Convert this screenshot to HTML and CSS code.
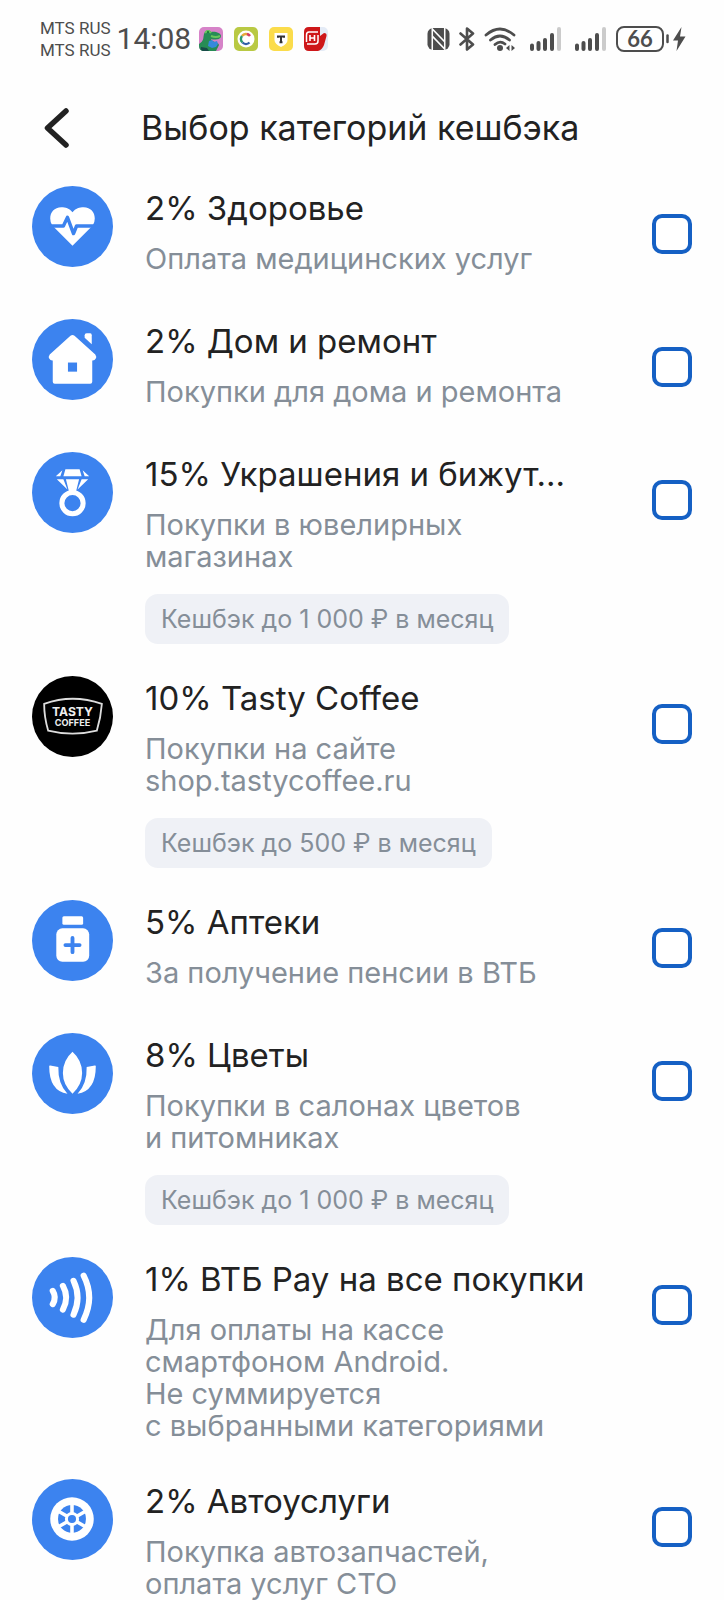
FILE: index.html
```html
<!DOCTYPE html>
<html lang="ru">
<head>
<meta charset="utf-8">
<meta name="viewport" content="width=device-width, initial-scale=1">
<title>Выбор категорий кешбэка</title>
<link rel="stylesheet" href="styles.css">
</head>
<body>
<div class="status">
  <div class="carriers"><span>MTS RUS</span><span>MTS RUS</span></div>
  <span class="clock">14:08</span>
  <div class="apps">
    <svg viewBox="0 0 24 24"><rect width="24" height="24" rx="5" fill="#d683c8"/><path d="M0 17C5 14 4 11 5 7C7 2 11 3 12 5C16 4 22 6 22 9C22 13 15 13 12 12C13 16 19 14 20 18L17 24H5Q0 24 0 19Z" fill="#278c55"/><path d="M6 6Q9 2 12 6M12 9Q17 11 21 9" stroke="#68c65c" stroke-width="2" fill="none"/><path d="M10 14l3-1 2 2 3-1 1 3-2 3-4 1-4-2z" fill="#3689dc"/><path d="M2 20l6 1 2 3H4Q1 23 2 20Z" fill="#174b48"/><circle cx="9" cy="5" r="1" fill="#173"/></svg>
    <svg viewBox="0 0 24 24"><rect width="24" height="24" rx="5" fill="#b9c943"/><circle cx="12" cy="12" r="8.500" fill="#fff"/><path d="M15.500 8.500A5 5 0 0 0 8 9" stroke="#e5a93a" stroke-width="2.400" fill="none"/><path d="M8 9A5 5 0 0 0 8.500 15.500" stroke="#2c9a72" stroke-width="2.400" fill="none"/><path d="M8.500 15.500A5 5 0 0 0 15.500 15.500" stroke="#315fa8" stroke-width="2.400" fill="none"/><path d="M13 7Q15 7.500 16 9" stroke="#d43d68" stroke-width="2.400" fill="none"/></svg>
    <svg viewBox="0 0 24 24"><rect width="24" height="24" rx="5" fill="#fbdc4b"/><path d="M5.500 6h13v7q0 4-6.500 7-6.500-3-6.500-7z" fill="#fff"/><path d="M9 10.800V9.500h6v1.300M12 9.500v6M10.500 15.300h3" stroke="#333" stroke-width="2" fill="none"/></svg>
    <svg viewBox="0 0 24 24"><rect width="24" height="24" rx="5" fill="#e4ebf6"/><path d="M5 0H16V9L20 6Q23 6 22.500 9L20 18Q18 23 14 24H5Q0 24 0 19V5Q0 0 5 0Z" fill="#ce1719"/><path d="M14 5H5Q2.500 5 2.500 8V15M3 17H11Q14 17 14 14V8" stroke="#fff" stroke-width="1.500" fill="none"/><path d="M6 8v6M10.500 8v6M6 11h4.500" stroke="#fff" stroke-width="1.600"/></svg>
  </div>
  <div class="signals">
    <svg class="nfc" viewBox="0 0 24 24"><rect x=".5" y=".5" width="23" height="23" rx="6" fill="#4d4d4d"/><path d="M5.500 24V1.500L18.500 15V0M5.500 9L18.500 22.500V15" fill="none" stroke="#fefefe" stroke-width="1.600"/></svg>
    <svg class="bt" viewBox="0 0 16 24"><path d="M1.500 6.500L14 17.500L8 22.500V1.500L14 6.500L1.500 17.500" fill="none" stroke="#4d4d4d" stroke-width="2.600" stroke-linejoin="round" stroke-linecap="round"/></svg>
    <svg class="wifi" viewBox="0 0 32 24"><path d="M2 8Q16-4 30 8M6.500 13Q16 5 25.500 13M11 17.500Q16 13 21 17" fill="none" stroke="#4d4d4d" stroke-width="2.800" stroke-linecap="round"/><circle cx="16" cy="21" r="3" fill="#4d4d4d"/><path d="M25.500 18v6l-3.500-3zM27.500 18v6l3.500-3z" fill="#4d4d4d"/></svg>
    <svg class="bars" viewBox="0 0 31 24"><path d="M2 18.500V22M8.500 16V22M15 13V22M22 8V22" stroke="#4d4d4d" stroke-width="4" stroke-linecap="round"/><path d="M29 2V22" stroke="#cbcbcb" stroke-width="4" stroke-linecap="round"/></svg>
    <svg class="bars" viewBox="0 0 31 24"><path d="M2 18.500V22M8.500 16V22M15 13V22M22 8V22" stroke="#4d4d4d" stroke-width="4" stroke-linecap="round"/><path d="M29 2V22" stroke="#cbcbcb" stroke-width="4" stroke-linecap="round"/></svg>
    <div class="power">
      <span class="battery">66</span>
      <svg class="bolt" viewBox="0 0 20 26"><path d="M1.500 9.500V16" stroke="#4d4d4d" stroke-width="2.500" stroke-linecap="round"/><path d="M15.500 1L7 14.500H12L10.500 25L19.500 10.500H14Z" fill="#4d4d4d"/></svg>
    </div>
  </div>
</div>

<header class="header">
  <button class="back" type="button" aria-label="Назад"><svg viewBox="0 0 25 40"><path d="M22 3L3.500 20L22 37" fill="none" stroke="#222" stroke-width="5.500" stroke-linecap="round" stroke-linejoin="round"/></svg></button>
  <h1>Выбор категорий кешбэка</h1>
</header>

<main class="list">
  <label class="item">
    <svg class="icon" viewBox="0 0 80 80"><circle cx="40" cy="40" r="40" fill="#3c83ef"/><path d="M40 26C43 22 47 21 51 21C58 21 62 26 62 32Q62 36 60 39L40 59L20 39Q18 36 18 32C18 26 22 21 29 21C33 21 37 22 40 26Z" fill="#fff"/><path d="M17 39.500H31L35 31L41 47L44 39.500H63" fill="none" stroke="#3c83ef" stroke-width="3.400" stroke-linejoin="round"/></svg>
    <span class="text"><span class="name">2% Здоровье</span><span class="note">Оплата медицинских услуг</span></span>
    <input class="check" type="checkbox">
  </label>
  <label class="item">
    <svg class="icon" viewBox="0 0 80 80"><circle cx="40" cy="40" r="40" fill="#3c83ef"/><path d="M38 16.500Q40 15 42 16.500L62.500 35Q64 37 63 39Q62 41 60 41H59.500V62Q59.500 64 57.500 64H22.500Q20.500 64 20.500 62V41H20Q18 41 17 39Q16 37 17.500 35Z" fill="#fff"/><rect x="35.500" y="43" width="9" height="9" fill="#3c83ef"/><path d="M52 16Q52 14 54 14H57.500Q59 14 59 16V25L52 18.500Z" fill="#fff"/></svg>
    <span class="text"><span class="name">2% Дом и ремонт</span><span class="note">Покупки для дома и ремонта</span></span>
    <input class="check" type="checkbox">
  </label>
  <label class="item">
    <svg class="icon" viewBox="0 0 80 80"><circle cx="40" cy="40" r="40" fill="#3c83ef"/><circle cx="40" cy="50.500" r="10.500" fill="none" stroke="#fff" stroke-width="5"/><path d="M33 17H47L49 24H31ZM30 18L28 24H23.500ZM50 18L52 24H56.500ZM24.500 27H31L35 37ZM55.500 27H49L45 37ZM33.500 27H46.500L43.500 39H36.500Z" fill="#fff"/></svg>
    <span class="text"><span class="name">15% Украшения и бижут…</span><span class="note">Покупки в ювелирных магазинах</span><span class="chip">Кешбэк до 1 000 ₽ в месяц</span></span>
    <input class="check" type="checkbox">
  </label>
  <label class="item">
    <svg class="icon" viewBox="0 0 80 80"><circle cx="40" cy="40" r="40" fill="#000"/><path d="M12 27.500Q40 17.500 69 27.500Q68 41 64 54Q40 60 16 54Q12 41 12 27.500Z" fill="none" stroke="#ddd" stroke-width="1.800"/><text class="logo-top" x="40" y="39.500" text-anchor="middle">TASTY</text><text class="logo-bottom" x="40" y="49" text-anchor="middle">COFFEE</text></svg>
    <span class="text"><span class="name">10% Tasty Coffee</span><span class="note">Покупки на сайте shop.tastycoffee.ru</span><span class="chip">Кешбэк до 500 ₽ в месяц</span></span>
    <input class="check" type="checkbox">
  </label>
  <label class="item">
    <svg class="icon" viewBox="0 0 80 80"><circle cx="40" cy="40" r="40" fill="#3c83ef"/><rect x="30" y="16" width="20.500" height="8.500" rx="1.500" fill="#fff"/><rect x="24" y="28" width="32.500" height="33" rx="6" fill="#fff"/><path d="M40 37.500V51.500M33 44.500H47" stroke="#3c83ef" stroke-width="3.800" stroke-linecap="round"/></svg>
    <span class="text"><span class="name">5% Аптеки</span><span class="note">За получение пенсии в ВТБ</span></span>
    <input class="check" type="checkbox">
  </label>
  <label class="item">
    <svg class="icon" viewBox="0 0 80 80"><circle cx="40" cy="40" r="40" fill="#3c83ef"/><path d="M40 18.500Q49.500 27 49.500 39.500Q49.500 51 40 60Q30.500 51 30.500 39.500Q30.500 27 40 18.500ZM17 33Q16.500 32 18 32L26 33.500Q25.500 50 35 60Q17 57 17 33ZM63 33Q63.500 32 62 32L54 33.500Q54.500 50 45 60Q63 57 63 33Z" fill="#fff"/></svg>
    <span class="text"><span class="name">8% Цветы</span><span class="note">Покупки в салонах цветов и&nbsp;питомниках</span><span class="chip">Кешбэк до 1 000 ₽ в месяц</span></span>
    <input class="check" type="checkbox">
  </label>
  <label class="item">
    <svg class="icon" viewBox="0 0 80 80"><circle cx="40" cy="40" r="40" fill="#3c83ef"/><path d="M20.500 33.500Q24.500 40 20.500 46.500M30.500 28.500Q37 40 30.500 52M41 23.500Q49 40 41 57M51 18.500Q62 40 51 62" fill="none" stroke="#fff" stroke-width="6" stroke-linecap="round"/></svg>
    <span class="text"><span class="name">1% ВТБ Pay на все покупки</span><span class="note">Для оплаты на кассе смартфоном Android. Не&nbsp;суммируется с&nbsp;выбранными категориями</span></span>
    <input class="check" type="checkbox">
  </label>
  <label class="item">
    <svg class="icon" viewBox="0 0 80 80"><circle cx="40" cy="40" r="40" fill="#3c83ef"/><circle cx="39.500" cy="39.500" r="21.500" fill="#fff"/><circle cx="39.500" cy="39.500" r="13.800" fill="#3c83ef"/><path d="M39.500 25V54M27 32.300L52 46.700M27 46.700L52 32.300" stroke="#fff" stroke-width="3.500"/><circle cx="39.500" cy="39.500" r="7" fill="#fff"/><circle cx="39.500" cy="39.500" r="4" fill="#3c83ef"/></svg>
    <span class="text"><span class="name">2% Автоуслуги</span><span class="note">Покупка автозапчастей, оплата услуг СТО</span></span>
    <input class="check" type="checkbox">
  </label>
</main>
</body>
</html>
```
FILE: styles.css
```css
* {
  box-sizing: border-box;
}

body {
  margin: 0;
  background: #fefefe;
  color: #222;
  font-family: Inter, "Noto Sans", sans-serif;
}

svg {
  display: block;
  flex: none;
}

.status {
  display: flex;
  align-items: center;
  height: 78px;
  padding: 0 38px 0 40px;
  color: #4d4d4d;
}

.carriers {
  display: flex;
  flex-direction: column;
  font: 17px/22px Roboto, sans-serif;
  margin-right: 6px;
  padding-bottom: 1px;
}

.clock {
  font: 400 30px/40px Roboto, sans-serif;
}

.apps {
  display: flex;
  gap: 11px;
  margin-left: 8px;
}

.apps svg {
  width: 24px;
  height: 24px;
}

.signals {
  display: flex;
  align-items: center;
  gap: 14px;
  margin-left: auto;
}

.nfc {
  width: 23px;
  height: 24px;
}

.bt {
  width: 16px;
  height: 24px;
  margin: 0 -5px;
}

.wifi {
  width: 32px;
  height: 24px;
}

.bars {
  width: 31px;
  height: 24px;
}

.power {
  display: flex;
  align-items: center;
  gap: 2px;
  margin-left: -4px;
}

.battery {
  width: 48px;
  border: 2px solid #4d4d4d;
  border-radius: 8px;
  font: 700 22px/22px Lato, sans-serif;
  text-align: center;
}

.bolt {
  width: 20px;
  height: 26px;
}

.header {
  display: flex;
  align-items: center;
  height: 100px;
  padding: 0 32px;
}

.back {
  width: 109px;
  padding: 0 0 0 12px;
  border: 0;
  background: none;
}

.back svg {
  width: 25px;
  height: 40px;
}

h1 {
  margin: 0;
  font-size: 34px;
  font-weight: 400;
  line-height: 44px;
}

.list {
  padding: 8px 32px 0;
}

.item {
  display: flex;
  align-items: flex-start;
  min-height: 133px;
  padding-bottom: 32px;
}

.icon {
  width: 81px;
  height: 81px;
  margin-right: 32px;
}

.text {
  display: flex;
  flex: 1;
  flex-direction: column;
  align-items: flex-start;
  min-width: 0;
  margin-right: 48px;
}

.name {
  font-size: 33px;
  line-height: 44px;
  white-space: nowrap;
}

.note {
  max-width: 430px;
  margin-top: 13px;
  color: #858e98;
  font-size: 29px;
  line-height: 32px;
}

.note:last-child {
  margin-bottom: 5px;
}

.chip {
  margin-top: 21px;
  padding: 0 16px;
  border-radius: 13px;
  background: #eff1f6;
  color: #858e98;
  font-size: 25px;
  line-height: 50px;
  white-space: nowrap;
}

.check {
  flex: none;
  appearance: none;
  width: 40px;
  height: 40px;
  margin: 28px 0 0;
  border: 4px solid #1560c4;
  border-radius: 10px;
  background: #fff;
}

.check:checked {
  background: #1560c4;
}

.logo-top,
.logo-bottom {
  fill: #eee;
  font-family: Inter, sans-serif;
  font-weight: 700;
}

.logo-top {
  font-size: 12px;
}

.logo-bottom {
  font-size: 9px;
}
```
